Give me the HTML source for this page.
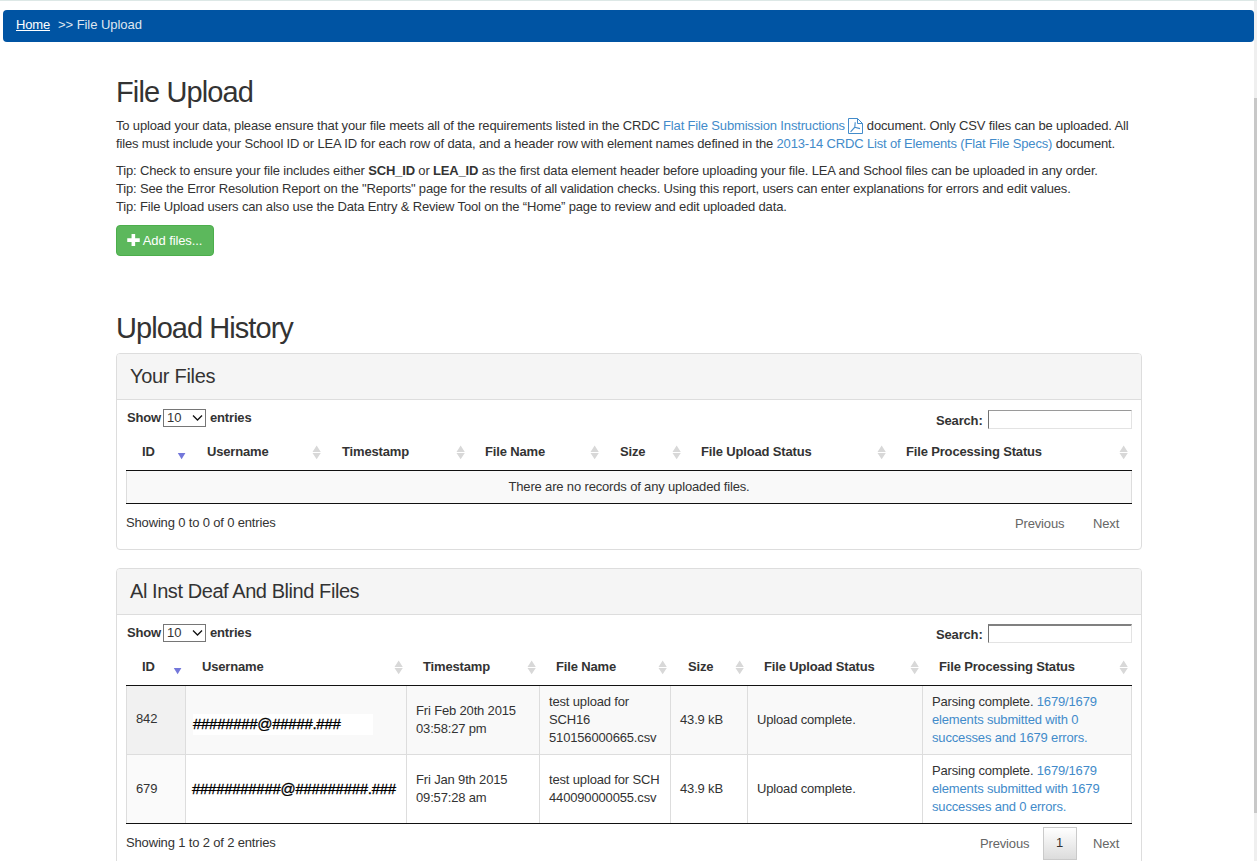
<!DOCTYPE html>
<html><head><meta charset="utf-8">
<style>
*{box-sizing:border-box;margin:0;padding:0}
html,body{width:1257px;height:861px;overflow:hidden;background:#fff}
body{font-family:"Liberation Sans",sans-serif;font-size:13px;color:#333;position:relative}
.abs{position:absolute}
#topline{left:0;top:0;width:1257px;height:1px;background:#dde8e6;z-index:2}
#crumb{left:3px;top:10px;width:1251px;height:32px;background:#0054a3;border-radius:4px;color:#dfe6f0;font-size:13px;letter-spacing:-0.16px;line-height:30px;padding-left:13px;white-space:nowrap}
#crumb a{color:#fff;text-decoration:underline}
#sb{left:1254px;top:0;width:3px;height:861px;background:#efefef}
#sbthumb{left:1254px;top:98px;width:3px;height:715px;background:#c8c8c8}
h1{position:absolute;left:116px;top:74px;font-size:29px;letter-spacing:-0.87px;font-weight:normal;color:#333;line-height:36px;white-space:nowrap}
.p{position:absolute;left:116px;font-size:13px;letter-spacing:-0.16px;line-height:18px;white-space:nowrap;color:#333}
a.l{color:#428bca;text-decoration:none}
.btn{position:absolute;left:116px;top:225px;width:98px;height:31px;background:#5cb85c;border:1px solid #4cae4c;border-radius:4px;color:#fff;font-size:13px;line-height:29px;padding-left:10px;white-space:nowrap;letter-spacing:-0.1px}
h2{position:absolute;left:116px;top:310px;font-size:29px;letter-spacing:-0.95px;font-weight:normal;color:#333;line-height:36px;white-space:nowrap}
.panel{position:absolute;left:116px;width:1026px;border:1px solid #ddd;border-radius:4px;background:#fff;overflow:hidden}
.ph{height:46px;background:#f5f5f5;border-bottom:1px solid #ddd;font-size:20px;letter-spacing:-0.3px;line-height:45px;padding-left:13px;color:#333;white-space:nowrap}
.pb{position:relative}
.show{position:absolute;left:10px;font-weight:bold;font-size:13px;white-space:nowrap}
.sel{display:inline-block;vertical-align:middle;width:43px;height:18px;border:1px solid #767676;border-radius:0;font-weight:normal;position:relative;background:#fff;font-size:13px;line-height:16px;padding-left:3px;margin:0}
.search{position:absolute;font-weight:bold;white-space:nowrap}
.sinput{position:absolute;width:145px;height:19px;border:1px solid #a9a9a9;border-top-color:#767676;background:#fff}
table{border-collapse:collapse;position:absolute;left:9px;table-layout:fixed}
th{font-weight:bold;text-align:left;font-size:13px;position:relative;border-bottom:1px solid #111;white-space:nowrap}
td{font-size:13px;line-height:18px;vertical-align:middle}
.sort{position:absolute;width:8px;height:14px}
.info{position:absolute;left:9px;white-space:nowrap}
.pg{position:absolute;white-space:nowrap;color:#666}
.t{position:absolute;font-size:13px;letter-spacing:-0.16px;line-height:18px;white-space:nowrap;color:#333}
.b{font-weight:bold}
.g{color:#666}
.lk{color:#428bca}
.u{color:#000;font-size:15px;line-height:21px;letter-spacing:-0.3px;-webkit-text-stroke:0.3px #000}
.sel{position:absolute;width:43px;height:18px;border:1px solid #767676;background:#fff;font-size:13px;line-height:16px;padding-left:3px;color:#333}
.inp{position:absolute;width:144px;height:19px;border:1px solid #e3e3e3;border-top-color:#9a9a9a;border-left-color:#707070;background:#fff}
.hline{position:absolute;height:1px;background:#111}
.vl{position:absolute;top:686px;width:1px;height:137px;background:#ddd}
.sd{position:absolute;width:0;height:0;border-left:4.5px solid transparent;border-right:4.5px solid transparent;border-top:6px solid #7b7bd6}
.sb2{position:absolute;width:8px;height:14px}
.sb2:before{content:"";position:absolute;left:0;top:0;border-left:4px solid transparent;border-right:4px solid transparent;border-bottom:5px solid #d8d8d8}
.sb2:after{content:"";position:absolute;left:0;top:9px;border-left:4px solid transparent;border-right:4px solid transparent;border-top:5px solid #d8d8d8}
</style></head><body>
<div id="topline" class="abs"></div>
<div id="crumb" class="abs"><a>Home</a><span style="position:absolute;left:55px;top:0;letter-spacing:-0.05px">&gt;&gt; File Upload</span></div>
<div id="sb" class="abs"></div><div id="sbthumb" class="abs"></div>

<h1>File Upload</h1>
<div class="p" style="top:117px">To upload your data, please ensure that your file meets all of the requirements listed in the CRDC <a class="l">Flat File Submission Instructions</a> <svg width="15" height="16" viewBox="0 0 15 16" style="vertical-align:-4px"><path d="M0.5 0.5H9.5L14.5 5.5V15.5H0.5Z M9.5 0.5V5.5H14.5" fill="none" stroke="#428bca" stroke-width="1"/><path d="M7.2 4.2L6.8 9.2L2.6 13.8M6.8 9.2L12 10.6" fill="none" stroke="#428bca" stroke-width="1.1"/></svg> document. Only CSV files can be uploaded. All</div>
<div class="p" style="top:135px">files must include your School ID or LEA ID for each row of data, and a header row with element names defined in the <a class="l">2013-14 CRDC List of Elements (Flat File Specs)</a> document.</div>
<div class="p" style="top:162px">Tip: Check to ensure your file includes either <b>SCH_ID</b> or <b>LEA_ID</b> as the first data element header before uploading your file. LEA and School files can be uploaded in any order.</div>
<div class="p" style="top:180px">Tip: See the Error Resolution Report on the "Reports" page for the results of all validation checks. Using this report, users can enter explanations for errors and edit values.</div>
<div class="p" style="top:198px">Tip: File Upload users can also use the Data Entry &amp; Review Tool on the “Home” page to review and edit uploaded data.</div>

<div class="btn"><svg width="13" height="12" viewBox="0 0 12.5 12" style="vertical-align:-1px"><path d="M4.3 0H7.9V4.3H12.5V7.9H7.9V12H4.3V7.9H0V4.3H4.3Z" fill="#fff"/></svg> Add files...</div>

<h2>Upload History</h2>

<!-- Panel 1 -->
<div class="panel" style="top:353px;height:197px">
  <div class="ph">Your Files</div>
</div>
<div class="t b" style="left:127px;top:409px">Show</div>
<div class="sel" style="left:163px;top:409px">10<svg width="11" height="8" viewBox="0 0 11 8" style="position:absolute;left:28px;top:4px"><path d="M1 1.5L5.5 6L10 1.5" fill="none" stroke="#111" stroke-width="1.3"/></svg></div>
<div class="t b" style="left:210px;top:409px">entries</div>
<div class="t b" style="left:936px;top:412px">Search:</div>
<div class="inp" style="left:988px;top:410px"></div>
<div class="hline" style="left:126px;top:470px;width:1006px"></div>
<div class="t b" style="left:142px;top:443px">ID</div><svg class="abs" width="10" height="8" viewBox="0 0 10 8" style="left:177px;top:453px"><path d="M0.8 0H8.4L4.6 6.3Z" fill="#7377da"/></svg>
<div class="t b" style="left:207px;top:443px">Username</div><svg class="abs" width="10" height="15" viewBox="0 0 10 15" style="left:312px;top:445px"><path d="M0.5 6.9L4.65 0.5L8.8 6.9Z M0.5 8H8.8L4.65 14.3Z" fill="#d8d8d8"/></svg>
<div class="t b" style="left:342px;top:443px">Timestamp</div><svg class="abs" width="10" height="15" viewBox="0 0 10 15" style="left:456px;top:445px"><path d="M0.5 6.9L4.65 0.5L8.8 6.9Z M0.5 8H8.8L4.65 14.3Z" fill="#d8d8d8"/></svg>
<div class="t b" style="left:485px;top:443px">File Name</div><svg class="abs" width="10" height="15" viewBox="0 0 10 15" style="left:590px;top:445px"><path d="M0.5 6.9L4.65 0.5L8.8 6.9Z M0.5 8H8.8L4.65 14.3Z" fill="#d8d8d8"/></svg>
<div class="t b" style="left:620px;top:443px">Size</div><svg class="abs" width="10" height="15" viewBox="0 0 10 15" style="left:672px;top:445px"><path d="M0.5 6.9L4.65 0.5L8.8 6.9Z M0.5 8H8.8L4.65 14.3Z" fill="#d8d8d8"/></svg>
<div class="t b" style="left:701px;top:443px">File Upload Status</div><svg class="abs" width="10" height="15" viewBox="0 0 10 15" style="left:877px;top:445px"><path d="M0.5 6.9L4.65 0.5L8.8 6.9Z M0.5 8H8.8L4.65 14.3Z" fill="#d8d8d8"/></svg>
<div class="t b" style="left:906px;top:443px">File Processing Status</div><svg class="abs" width="10" height="15" viewBox="0 0 10 15" style="left:1119px;top:445px"><path d="M0.5 6.9L4.65 0.5L8.8 6.9Z M0.5 8H8.8L4.65 14.3Z" fill="#d8d8d8"/></svg>
<div class="abs" style="left:126px;top:471px;width:1006px;height:32px;background:#f9f9f9;border-left:1px solid #ddd;border-right:1px solid #ddd"></div>
<div class="t" style="left:126px;width:1006px;text-align:center;top:478px">There are no records of any uploaded files.</div>
<div class="hline" style="left:126px;top:503px;width:1006px"></div>
<div class="t" style="left:126px;top:514px">Showing 0 to 0 of 0 entries</div>
<div class="t g" style="left:1015px;top:515px">Previous</div>
<div class="t g" style="left:1093px;top:515px">Next</div>

<!-- Panel 2 -->
<div class="panel" style="top:568px;height:320px">
  <div class="ph" style="letter-spacing:-0.43px">Al Inst Deaf And Blind Files</div>
</div>
<div class="t b" style="left:127px;top:624px">Show</div>
<div class="sel" style="left:163px;top:624px">10<svg width="11" height="8" viewBox="0 0 11 8" style="position:absolute;left:28px;top:4px"><path d="M1 1.5L5.5 6L10 1.5" fill="none" stroke="#111" stroke-width="1.3"/></svg></div>
<div class="t b" style="left:210px;top:624px">entries</div>
<div class="t b" style="left:936px;top:626px">Search:</div>
<div class="inp" style="left:988px;top:624px;border-top:2px solid #808080"></div>
<div class="t b" style="left:142px;top:658px">ID</div><svg class="abs" width="10" height="8" viewBox="0 0 10 8" style="left:173px;top:668px"><path d="M0.8 0H8.4L4.6 6.3Z" fill="#7377da"/></svg>
<div class="t b" style="left:202px;top:658px">Username</div><svg class="abs" width="10" height="15" viewBox="0 0 10 15" style="left:394px;top:660px"><path d="M0.5 6.9L4.65 0.5L8.8 6.9Z M0.5 8H8.8L4.65 14.3Z" fill="#d8d8d8"/></svg>
<div class="t b" style="left:423px;top:658px">Timestamp</div><svg class="abs" width="10" height="15" viewBox="0 0 10 15" style="left:527px;top:660px"><path d="M0.5 6.9L4.65 0.5L8.8 6.9Z M0.5 8H8.8L4.65 14.3Z" fill="#d8d8d8"/></svg>
<div class="t b" style="left:556px;top:658px">File Name</div><svg class="abs" width="10" height="15" viewBox="0 0 10 15" style="left:658px;top:660px"><path d="M0.5 6.9L4.65 0.5L8.8 6.9Z M0.5 8H8.8L4.65 14.3Z" fill="#d8d8d8"/></svg>
<div class="t b" style="left:688px;top:658px">Size</div><svg class="abs" width="10" height="15" viewBox="0 0 10 15" style="left:735px;top:660px"><path d="M0.5 6.9L4.65 0.5L8.8 6.9Z M0.5 8H8.8L4.65 14.3Z" fill="#d8d8d8"/></svg>
<div class="t b" style="left:764px;top:658px">File Upload Status</div><svg class="abs" width="10" height="15" viewBox="0 0 10 15" style="left:910px;top:660px"><path d="M0.5 6.9L4.65 0.5L8.8 6.9Z M0.5 8H8.8L4.65 14.3Z" fill="#d8d8d8"/></svg>
<div class="t b" style="left:939px;top:658px">File Processing Status</div><svg class="abs" width="10" height="15" viewBox="0 0 10 15" style="left:1119px;top:660px"><path d="M0.5 6.9L4.65 0.5L8.8 6.9Z M0.5 8H8.8L4.65 14.3Z" fill="#d8d8d8"/></svg>
<div class="hline" style="left:126px;top:685px;width:1006px"></div>
<!-- rows bg -->
<div class="abs" style="left:126px;top:686px;width:1006px;height:68px;background:#f9f9f9"></div>
<div class="abs" style="left:126px;top:686px;width:59px;height:68px;background:#f1f1f1"></div>
<div class="abs" style="left:126px;top:755px;width:59px;height:68px;background:#fafafa"></div>
<div class="abs" style="left:126px;top:754px;width:1006px;height:1px;background:#ddd"></div>
<div class="vl" style="left:126px"></div><div class="vl" style="left:185px"></div><div class="vl" style="left:406px"></div><div class="vl" style="left:539px"></div><div class="vl" style="left:670px"></div><div class="vl" style="left:747px"></div><div class="vl" style="left:922px"></div><div class="vl" style="left:1131px"></div>
<div class="hline" style="left:126px;top:823px;width:1006px"></div>
<!-- row1 -->
<div class="t" style="left:136px;top:710px">842</div>
<div class="abs" style="left:193px;top:714px;width:180px;height:21px;background:#fff"></div>
<div class="t u" style="left:193px;top:713px">########@#####.###</div>
<div class="t" style="left:416px;top:702px">Fri Feb 20th 2015<br>03:58:27 pm</div>
<div class="t" style="left:549px;top:693px">test upload for<br>SCH16<br>510156000665.csv</div>
<div class="t" style="left:680px;top:711px">43.9 kB</div>
<div class="t" style="left:757px;top:711px">Upload complete.</div>
<div class="t" style="left:932px;top:693px">Parsing complete. <span class="lk">1679/1679</span><br><span class="lk">elements submitted with 0</span><br><span class="lk">successes and 1679 errors.</span></div>
<!-- row2 -->
<div class="t" style="left:136px;top:780px">679</div>
<div class="t u" style="left:192px;top:778px">###########@#########.###</div>
<div class="t" style="left:416px;top:771px">Fri Jan 9th 2015<br>09:57:28 am</div>
<div class="t" style="left:549px;top:771px">test upload for SCH<br>440090000055.csv</div>
<div class="t" style="left:680px;top:780px">43.9 kB</div>
<div class="t" style="left:757px;top:780px">Upload complete.</div>
<div class="t" style="left:932px;top:762px">Parsing complete. <span class="lk">1679/1679</span><br><span class="lk">elements submitted with 1679</span><br><span class="lk">successes and 0 errors.</span></div>
<div class="t" style="left:126px;top:834px">Showing 1 to 2 of 2 entries</div>
<div class="t g" style="left:980px;top:835px">Previous</div>
<div class="abs" style="left:1043px;top:827px;width:34px;height:33px;border:1px solid #cacaca;background:linear-gradient(#fff,#dcdcdc)"></div>
<div class="t" style="left:1056px;top:834px">1</div>
<div class="t g" style="left:1093px;top:835px">Next</div>
</body></html>
